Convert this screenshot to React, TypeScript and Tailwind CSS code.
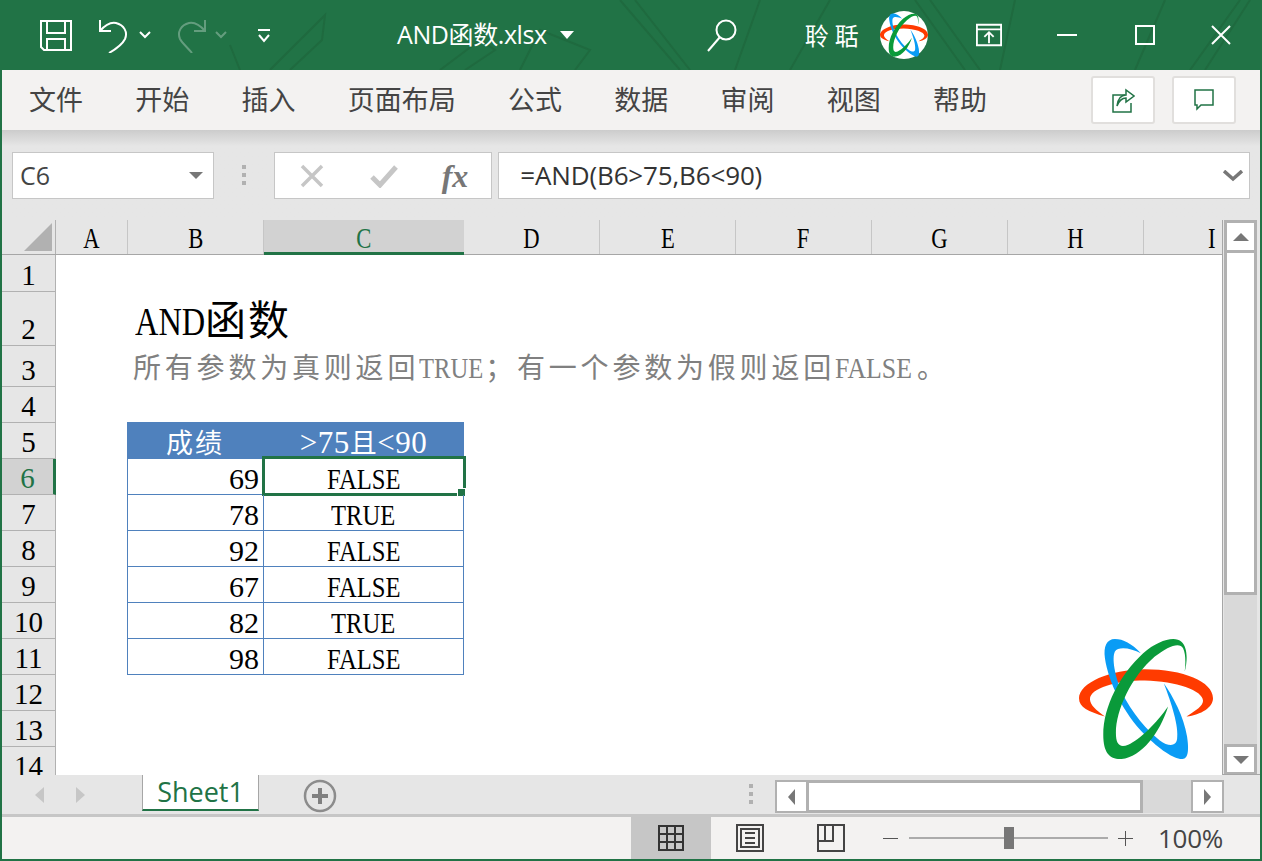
const sansFont = "font-['Noto_Sans_CJK_SC','Noto_Sans',sans-serif]";
const uiFont = "font-['Open_Sans','Noto_Sans_CJK_SC',sans-serif]";
const cellFont = "font-['Liberation_Serif','Noto_Sans_CJK_SC',serif]";

const tabs = ["文件", "开始", "插入", "页面布局", "公式", "数据", "审阅", "视图", "帮助"];

const columns = [
  { name: "A", width: "w-[72px]" },
  { name: "B", width: "w-[136px]" },
  { name: "C", width: "w-[200px]", active: true },
  { name: "D", width: "w-[136px]" },
  { name: "E", width: "w-[136px]" },
  { name: "F", width: "w-[136px]" },
  { name: "G", width: "w-[136px]" },
  { name: "H", width: "w-[136px]" },
  { name: "I", width: "w-[136px]" },
];

const tableRows = [
  { row: 6, score: 69, result: "FALSE", selected: true },
  { row: 7, score: 78, result: "TRUE" },
  { row: 8, score: 92, result: "FALSE" },
  { row: 9, score: 67, result: "FALSE" },
  { row: 10, score: 82, result: "TRUE" },
  { row: 11, score: 98, result: "FALSE" },
];

function Atom() {
  return (
    <>
      <path
        fill="#ff3b00"
        d="M135 290C85 275 57 262 57 235C57 190 150 148 255 148C370 148 460 185 460 235C460 262 425 285 380 290C410 272 430 258 430 243C430 212 350 184 255 182C170 182 90 205 90 238C90 255 110 272 135 290Z"
      />
      <path
        fill="#0a9cf5"
        d="M243 100C215 70 190 57 165 57C140 57 130 80 135 115C145 185 190 280 255 345C300 390 345 420 368 418C388 416 387 385 382 350C372 290 340 230 312 190C335 250 358 320 352 358C348 382 325 380 300 362C265 335 215 280 185 215C165 170 155 115 165 95C175 78 215 85 243 100Z"
      />
      <path
        fill="#0a9a3a"
        d="M375 155C385 115 382 80 365 65C345 47 295 60 250 100C180 165 130 260 130 345C130 400 150 420 185 418C245 412 300 340 325 260C290 310 240 360 205 375C180 385 168 375 168 340C168 270 215 170 285 110C325 78 360 65 370 85C378 100 378 130 375 155Z"
      />
    </>
  );
}

function TitleBar() {
  return (
    <div className="relative h-[70px] shrink-0 overflow-hidden bg-[#217346] flex items-center text-white">
      <svg className="absolute left-0 top-0 pointer-events-none" width="1262" height="70" fill="none" stroke="#1f6a3f" strokeWidth="2">
        <path d="M270 70L325 15L322 40L290 70M230 45L240 70M440 70L480 40L495 50L465 70M520 70L540 30L590 50L575 70" />
        <path d="M620 0L680 70M635 0L690 70M760 0L735 70M830 0L790 70M915 0L965 70M930 0L980 70M1015 0L1000 70M1165 0L1135 70M1240 0L1190 70M1250 0L1205 70" />
      </svg>
      {/* quick access */}
      <svg className="relative ml-[39px]" width="34" height="34" viewBox="0 0 34 34" fill="none" stroke="white" strokeWidth="2">
        <path d="M2 3H32V32H5L2 29Z" />
        <path d="M8 3V15H26V3M8 32V21H26V32" />
      </svg>
      <svg className="relative ml-[25px]" width="32" height="36" viewBox="0 0 32 36" fill="none" stroke="white" strokeWidth="2">
        <path d="M2 3V14H13" />
        <path d="M2 14C8 7 13 5 18 6C26 8 30 15 27 22C25 26 18 32 11 36" />
      </svg>
      <svg className="relative ml-[9px]" width="12" height="8" viewBox="0 0 12 8" fill="none" stroke="white" strokeWidth="2">
        <path d="M1 1L6 6L11 1" />
      </svg>
      <svg className="relative ml-[24px] opacity-30" width="32" height="36" viewBox="0 0 32 36" fill="none" stroke="white" strokeWidth="2">
        <path d="M30 3V14H19" />
        <path d="M30 14C24 7 19 5 14 6C6 8 2 15 5 22C7 26 14 32 17 36" />
      </svg>
      <svg className="relative ml-[8px] opacity-30" width="12" height="8" viewBox="0 0 12 8" fill="none" stroke="white" strokeWidth="2">
        <path d="M1 1L6 6L11 1" />
      </svg>
      <svg className="relative ml-[30px]" width="14" height="15" viewBox="0 0 14 15" fill="none" stroke="white" strokeWidth="2">
        <path d="M1 2H13M2 7L7 13L12 7" />
      </svg>
      <span className={`relative ml-[126px] text-[25px] whitespace-nowrap ${uiFont} tracking-[-0.4px]`}>AND函数.xlsx</span>
      <div className="relative ml-[13px] w-0 h-0 border-x-[7px] border-x-transparent border-t-[8px] border-t-white" />
      <svg className="relative ml-[133px]" width="30" height="34" viewBox="0 0 30 34" fill="none" stroke="white" strokeWidth="2">
        <circle cx="19" cy="12" r="9.5" />
        <path d="M13 19L1 33" />
      </svg>
      <span className={`relative ml-[68px] text-[24px] tracking-[6px] whitespace-nowrap ${sansFont}`}>聆聒</span>
      <svg className="relative ml-[15px] shrink-0" width="48" height="48" viewBox="57 35 403 403">
        <circle cx="258" cy="237" r="201" fill="white" />
        <Atom />
      </svg>
      <svg className="relative ml-[48px]" width="26" height="24" viewBox="0 0 28 24" fill="none" stroke="white" strokeWidth="2">
        <path d="M1 1H27V23H1ZM1 6H27M14 21V10M9 14L14 9L19 14" />
      </svg>
      <div className="relative ml-[55px] w-[20px] h-[2px] bg-white" />
      <div className="relative ml-[58px] w-[20px] h-[20px] border-2 border-white" />
      <svg className="relative ml-[56px]" width="20" height="20" viewBox="0 0 20 20" fill="none" stroke="white" strokeWidth="2">
        <path d="M1 1L19 19M19 1L1 19" />
      </svg>
    </div>
  );
}

function RibbonTabs() {
  return (
    <div className="h-[60px] shrink-0 bg-[#f3f2f1] flex items-center">
      <div className={`ml-[27px] mb-[4px] flex gap-[52.25px] text-[27px] text-[#444444] leading-none ${sansFont}`}>
        {tabs.map((tab) => (
          <span key={tab}>{tab}</span>
        ))}
      </div>
      <div className="ml-auto mr-[24px] flex gap-[17px]">
        <button className="w-[64px] h-[48px] bg-white border-2 border-[#e1dfdd] rounded-[3px] flex items-center justify-center">
          <svg width="24" height="26" viewBox="0 0 24 26" fill="none" stroke="#217346" strokeWidth="1.5">
            <path d="M14 8H2V25H20V16" />
            <path d="M6 19C7 11 11 8 15 8V3L23 9L15 15V11C11 11 8 14 6 19Z" />
          </svg>
        </button>
        <button className="w-[64px] h-[48px] bg-white border-2 border-[#e1dfdd] rounded-[3px] flex items-center justify-center">
          <svg width="20" height="22" viewBox="0 0 20 22" fill="none" stroke="#217346" strokeWidth="1.5">
            <path d="M1 1H19V16H7L3 20V16H1Z" />
          </svg>
        </button>
      </div>
    </div>
  );
}

function FormulaBar() {
  return (
    <div className="h-[90px] shrink-0 bg-gradient-to-b from-[#cccccc] via-[#e6e6e6] via-[18%] to-[#e6e6e6] pt-[22px] px-[10px] flex items-start">
      <div className="w-[202px] h-[47px] bg-white border border-[#c6c6c6] flex items-center pl-[7px] pr-[10px] justify-between">
        <span className={`text-[25px] text-[#444444] ${uiFont}`}>C6</span>
        <div className="w-0 h-0 border-x-[7px] border-x-transparent border-t-[7px] border-t-[#777777]" />
      </div>
      <div className="ml-[28px] w-[4px] h-[20px] mt-[13px] flex flex-col justify-between">
        <div className="h-[4px] bg-[#b1b1b1]" />
        <div className="h-[4px] bg-[#b1b1b1]" />
        <div className="h-[4px] bg-[#b1b1b1]" />
      </div>
      <div className="ml-[28px] w-[219px] h-[47px] bg-white border border-[#c6c6c6] flex items-center pl-[25px]">
        <svg width="24" height="24" viewBox="0 0 24 24" fill="none" stroke="#c6c6c6" strokeWidth="3.5">
          <path d="M2 2L22 22M22 2L2 22" />
        </svg>
        <svg className="ml-[46px]" width="28" height="24" viewBox="0 0 28 24" fill="none" stroke="#c6c6c6" strokeWidth="5">
          <path d="M2 13L10 21L26 3" />
        </svg>
        <span className="ml-[44px] text-[32px] leading-none italic font-bold text-[#777777] font-['Liberation_Serif',serif]">fx</span>
      </div>
      <div className="ml-[6px] w-[753px] h-[47px] bg-white border border-[#c6c6c6] flex items-center pl-[21px] pr-[6px] justify-between">
        <span className={`text-[26px] text-[#333333] whitespace-nowrap ${uiFont} tracking-[-0.15px]`}>=AND(B6&gt;75,B6&lt;90)</span>
        <svg width="20" height="12" viewBox="0 0 20 12" fill="none" stroke="#777777" strokeWidth="3.5">
          <path d="M1 1L10 9L19 1" />
        </svg>
      </div>
    </div>
  );
}

function ColumnHeader() {
  return (
    <div className="h-[35px] shrink-0 flex border-b border-[#a6a6a6] bg-[#e6e6e6]">
      <div className="w-[54px] shrink-0 border-r border-[#b1b1b1] relative">
        <div className="absolute right-[3px] bottom-[3px] w-0 h-0 border-l-[28px] border-l-transparent border-b-[28px] border-b-[#b1b1b1]" />
      </div>
      {columns.map((col) => (
        <div
          key={col.name}
          className={`${col.width} shrink-0 text-[29px] leading-[36px] text-center overflow-hidden ${cellFont} ${
            col.active
              ? "bg-[#d2d2d2] text-[#217346] border-b-[3px] border-[#217346] h-[35px]"
              : "text-black border-r border-[#c6c6c6] h-[34px]"
          }`}
        >
          <span className="inline-block scale-x-[0.78]">{col.name}</span>
        </div>
      ))}
    </div>
  );
}

function RowHead({ n, h, active }: { n: number; h: string; active?: boolean }) {
  return (
    <div
      className={`${h} w-[54px] shrink-0 flex items-end justify-center text-[29px] leading-[32px] border-b border-r border-[#b1b1b1] ${cellFont} ${
        active ? "bg-[#d2d2d2] text-[#217346] border-r-[3px] border-r-[#217346]" : "bg-[#e6e6e6] text-black"
      }`}
    >
      {n}
    </div>
  );
}

function Sheet() {
  return (
    <div className={`relative flex-1 min-w-0 flex flex-col overflow-hidden bg-white ${cellFont}`}>
      <ColumnHeader />
      <div className="flex h-[37px] shrink-0">
        <RowHead n={1} h="h-[37px]" />
      </div>
      <div className="flex h-[54px] shrink-0">
        <RowHead n={2} h="h-[54px]" />
        <div className={`ml-[79px] self-end text-[41px] leading-[50px] tracking-[2px] whitespace-nowrap text-black ${sansFont}`}>
          <span className="inline-block w-[70px] origin-left scale-x-[0.79] tracking-[0px] font-['Liberation_Serif',serif]">AND</span>函数
        </div>
      </div>
      <div className="flex h-[41px] shrink-0">
        <RowHead n={3} h="h-[41px]" />
        <div className={`ml-[77px] text-[28px] leading-[40px] tracking-[3.8px] whitespace-nowrap text-[#808080] ${sansFont}`}>
          所有参数为真则返回
          <span className="inline-block w-[66px] origin-left scale-x-[0.82] text-[30px] tracking-[0px] font-['Liberation_Serif',serif]">TRUE</span>
          ；有一个参数为假则返回
          <span className="inline-block w-[82px] origin-left scale-x-[0.86] text-[30px] tracking-[0px] font-['Liberation_Serif',serif]">FALSE</span>
          。
        </div>
      </div>
      <div className="flex h-[36px] shrink-0">
        <RowHead n={4} h="h-[36px]" />
      </div>
      <div className="flex h-[36px] shrink-0">
        <RowHead n={5} h="h-[36px]" />
        <div className="ml-[71px] -mt-px h-[37px] w-[136px] bg-[#4f81bd] text-white text-center text-[27px] leading-[40px] tracking-[2px]">
          <span className={sansFont}>成绩</span>
        </div>
        <div className="w-[201px] -mt-px h-[37px] bg-[#4f81bd] text-white text-center text-[31px] leading-[40px] tracking-[0.5px]">
          &gt;75<span className={`${sansFont} text-[27px]`}>且</span>&lt;90
        </div>
      </div>
      {tableRows.map((r) => (
        <div key={r.row} className="flex h-[36px] shrink-0">
          <RowHead n={r.row} h="h-[36px]" active={r.selected} />
          <div className="ml-[71px] w-[136px] border-l border-b border-[#4f81bd] text-right pr-[4px] text-[30px] leading-[40px] text-black">
            {r.score}
          </div>
          <div className="relative w-[201px] border-x border-b border-[#4f81bd] text-center text-[30px] leading-[40px] text-black">
            <span className="inline-block scale-x-[0.82]">{r.result}</span>
            {r.selected && (
              <>
                <div className="absolute -left-[2px] -top-[3px] w-[204px] h-[40px] border-[3px] border-[#217346]" />
                <div className="absolute -right-[3px] -bottom-[3px] w-[9px] h-[9px] bg-[#217346] border border-white" />
              </>
            )}
          </div>
        </div>
      ))}
      {[12, 13, 14].map((n) => (
        <div key={n} className="flex h-[36px] shrink-0">
          <RowHead n={n} h="h-[36px]" />
        </div>
      ))}
      <svg className="absolute left-[1077px] top-[418px]" width="134" height="122" viewBox="57 55 403 365">
        <Atom />
      </svg>
    </div>
  );
}

function VerticalScroll() {
  return (
    <div className="w-[38px] shrink-0 bg-[#e6e6e6] border-l border-[#a6a6a6] pl-[1px] flex flex-col">
      <div className="w-[33px] h-[33px] bg-white border-[3px] border-[#b1b1b1] flex items-center justify-center">
        <div className="w-0 h-0 border-x-[8px] border-x-transparent border-b-[8px] border-b-[#777777]" />
      </div>
      <div className="w-[33px] h-[345px] bg-white border-[3px] border-[#b1b1b1] -mt-[3px]" />
      <div className="w-[33px] flex-1 bg-[#d9d9d9]" />
      <div className="w-[33px] h-[31px] bg-white border-[3px] border-[#b1b1b1] flex items-center justify-center">
        <div className="w-0 h-0 border-x-[8px] border-x-transparent border-t-[8px] border-t-[#777777]" />
      </div>
    </div>
  );
}

function SheetTabs() {
  return (
    <div className="h-[43px] shrink-0 bg-[#e6e6e6] border-t border-b-[3px] border-t-[#a6a6a6] border-b-[#c6c6c6] flex items-start -mt-px">
      <div className="ml-[33px] mt-[12px] w-0 h-0 border-y-[8px] border-y-transparent border-r-[9px] border-r-[#c6c6c6]" />
      <div className="ml-[32px] mt-[12px] w-0 h-0 border-y-[8px] border-y-transparent border-l-[9px] border-l-[#c6c6c6]" />
      <div className="ml-[57px] -mt-px w-[117px] h-[37px] bg-white border-x border-[#a6a6a6] border-b-2 border-b-[#217346] text-center">
        <span className={`text-[27px] leading-[36px] text-[#217346] ${uiFont}`}>Sheet1</span>
      </div>
      <svg className="ml-[44px] mt-[4px]" width="34" height="34" viewBox="0 0 34 34" fill="none">
        <circle cx="17" cy="17" r="15" stroke="#8c8c8c" strokeWidth="2.5" />
        <path d="M17 9V25M9 17H25" stroke="#808080" strokeWidth="4" />
      </svg>
      <div className="ml-[412px] mt-[9px] w-[4px] h-[20px] flex flex-col justify-between">
        <div className="h-[4px] bg-[#b1b1b1]" />
        <div className="h-[4px] bg-[#b1b1b1]" />
        <div className="h-[4px] bg-[#b1b1b1]" />
      </div>
      <div className="ml-[22px] mt-[5px] flex h-[33px]">
        <div className="w-[33px] bg-white border-[2px] border-[#b1b1b1] flex items-center justify-center">
          <div className="w-0 h-0 border-y-[8px] border-y-transparent border-r-[7px] border-r-[#777777]" />
        </div>
        <div className="w-[337px] bg-white border-[3px] border-[#b1b1b1] -ml-[2px]" />
        <div className="w-[48px] bg-[#d9d9d9]" />
        <div className="w-[33px] bg-white border-[2px] border-[#b1b1b1] flex items-center justify-center">
          <div className="w-0 h-0 border-y-[8px] border-y-transparent border-l-[7px] border-l-[#777777]" />
        </div>
      </div>
    </div>
  );
}

function StatusBar() {
  return (
    <div className="flex-1 bg-[#f3f2f1] flex items-stretch">
      <div className="ml-[629px] w-[80px] bg-[#c6c6c6] flex items-center justify-center">
        <svg width="26" height="26" viewBox="0 0 26 26" fill="none" stroke="#333333" strokeWidth="2">
          <path d="M1 1H25V25H1ZM9 1V25M17 1V25M1 9H25M1 17H25" />
        </svg>
      </div>
      <div className="ml-[25px] flex items-center">
        <svg width="28" height="28" viewBox="0 0 28 28" fill="none" stroke="#444444" strokeWidth="2">
          <path d="M1 1H27V27H1ZM5 5H23V23H5ZM9 9H19M9 14H19M9 19H19" />
        </svg>
      </div>
      <div className="ml-[53px] flex items-center">
        <svg width="28" height="28" viewBox="0 0 28 28" fill="none" stroke="#444444" strokeWidth="2">
          <path d="M1 1H27V27H1ZM1 17H16V1M8 1V17" />
        </svg>
      </div>
      <div className="ml-[38px] flex items-center">
        <div className="w-[15px] h-[1px] bg-[#555555]" />
        <div className="relative ml-[11px] w-[199px] h-[2px] bg-[#ababab]">
          <div className="absolute left-[95px] -top-[10px] w-[10px] h-[22px] bg-[#777777]" />
        </div>
        <svg className="ml-[10px]" width="15" height="15" viewBox="0 0 15 15" fill="none" stroke="#555555" strokeWidth="1">
          <path d="M7.5 0V15M0 7.5H15" />
        </svg>
        <span className={`ml-[25px] text-[26px] text-[#444444] tracking-[-0.3px] ${uiFont}`}>100%</span>
      </div>
    </div>
  );
}

export default function App() {
  return (
    <div className="w-[1262px] h-[861px] overflow-hidden flex flex-col bg-[#217346] border-b-2 border-[#217346]">
      <TitleBar />
      <div className="flex-1 min-h-0 mx-[2px] flex flex-col">
        <RibbonTabs />
        <FormulaBar />
        <div className="flex h-[555px] shrink-0 bg-[#e6e6e6]">
          <Sheet />
          <VerticalScroll />
        </div>
        <SheetTabs />
        <StatusBar />
      </div>
    </div>
  );
}
